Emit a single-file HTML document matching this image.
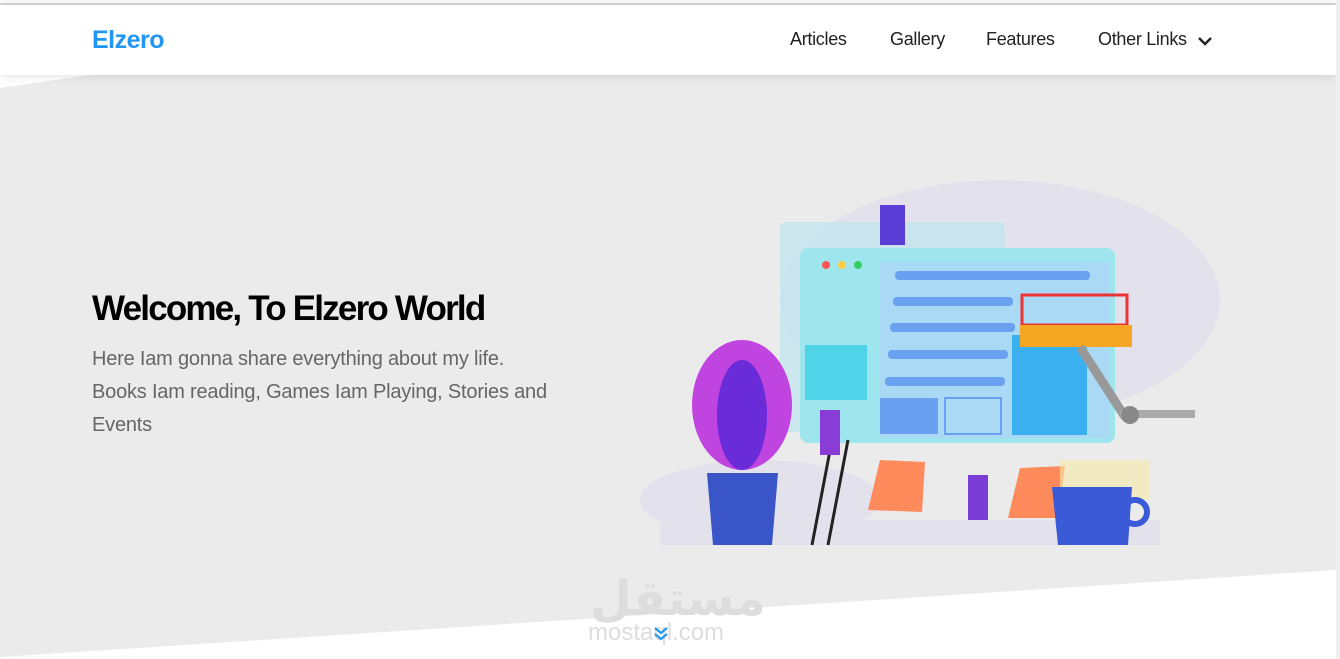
<!DOCTYPE html>
<html><head><style>
*{margin:0;padding:0;box-sizing:border-box}
body{width:1340px;height:659px;overflow:hidden;background:#fff;font-family:"Liberation Sans",sans-serif;position:relative}
.topline{position:absolute;left:0;top:3px;width:1340px;height:2px;background:#ddd}
.sb{position:absolute;right:0;top:0;width:4px;height:659px;background:#f0f0f0}
.bg{position:absolute;left:0;top:0;width:1336px;height:659px}
header{position:absolute;left:0;top:5px;width:1336px;height:70px;background:#fff;box-shadow:0 0 10px rgba(0,0,0,.15)}
.logo{position:absolute;left:92px;top:21px;font-size:25px;font-weight:bold;color:#2196f3;letter-spacing:-0.5px}
nav{position:absolute;top:24px;font-size:18px;color:#222}
nav span{position:absolute;white-space:nowrap;letter-spacing:-0.3px}
h1{position:absolute;left:92px;top:289px;font-size:35px;font-weight:bold;letter-spacing:-1.8px;color:#000;white-space:nowrap}
p{position:absolute;left:92px;top:343px;font-size:20px;line-height:33px;color:#666;white-space:nowrap;letter-spacing:-0.2px}
</style></head><body>
<svg class="bg" viewBox="0 0 1336 659">
<polygon points="0,88 90,75 1336,75 1336,570 0,657" fill="#ebebeb"/>
<text x="590" y="615" font-size="48" font-weight="bold" fill="#ddd" font-family="DejaVu Sans,sans-serif">مستقل</text>
<text x="588" y="640" font-size="24" fill="#ddd" font-family="Liberation Sans,sans-serif">mostaql.com</text>
<path d="M655 628l6 5 6-5M655 634l6 5 6-5" stroke="#2196f3" stroke-width="2.2" fill="none"/>
<ellipse cx="1000" cy="300" rx="220" ry="120" fill="#e3e2ec"/>
<ellipse cx="760" cy="500" rx="120" ry="40" fill="#e3e2ec"/>
<rect x="660" y="520" width="500" height="25" fill="#e3e2ec"/>
<rect x="780" y="222" width="225" height="210" rx="6" fill="#bfe6ef" opacity=".7"/>
<rect x="800" y="248" width="315" height="195" rx="8" fill="#9fe5ee"/>
<rect x="880" y="262" width="230" height="176" fill="#a9d9f5"/>
<circle cx="826" cy="265" r="4" fill="#f55"/><circle cx="842" cy="265" r="4" fill="#fc4"/><circle cx="858" cy="265" r="4" fill="#3c6"/>
<rect x="895" y="271" width="195" height="9" rx="4" fill="#6aa0f0"/>
<rect x="893" y="297" width="120" height="9" rx="4" fill="#6aa0f0"/>
<rect x="890" y="323" width="125" height="9" rx="4" fill="#6aa0f0"/>
<rect x="888" y="350" width="120" height="9" rx="4" fill="#6aa0f0"/>
<rect x="885" y="377" width="120" height="9" rx="4" fill="#6aa0f0"/>
<rect x="805" y="345" width="62" height="55" fill="#4fd3e8"/>
<rect x="880" y="398" width="58" height="36" fill="#6aa0f0"/>
<rect x="945" y="398" width="56" height="36" fill="none" stroke="#6aa0f0" stroke-width="2"/>
<rect x="1012" y="335" width="75" height="100" fill="#3ab0f0"/>
<rect x="1022" y="295" width="105" height="30" fill="none" stroke="#e33" stroke-width="3"/>
<rect x="1020" y="325" width="112" height="22" fill="#f5a623"/>
<path d="M1080 347l45 70" stroke="#999" stroke-width="9"/>
<rect x="1120" y="410" width="75" height="8" fill="#aaa"/>
<circle cx="1130" cy="415" r="9" fill="#888"/>
<ellipse cx="742" cy="405" rx="50" ry="65" fill="#c044e0"/>
<ellipse cx="742" cy="415" rx="25" ry="55" fill="#6a2bd8"/>
<polygon points="707,473 778,473 772,545 713,545" fill="#3a55c8"/>
<path d="M812 545l20-105M828 545l20-105" stroke="#222" stroke-width="3"/>
<rect x="820" y="410" width="20" height="45" fill="#8a3dd6"/>
<rect x="880" y="205" width="25" height="40" fill="#5a3dd6"/>
<rect x="968" y="475" width="20" height="45" fill="#7a3dd6"/>
<polygon points="880,460 925,462 922,512 868,510" fill="#ff8a5c"/>
<polygon points="1020,468 1065,466 1058,518 1008,518" fill="#ff8a5c"/>
<rect x="1060" y="460" width="90" height="40" fill="#f7e9a6" opacity=".6"/>
<polygon points="1052,487 1132,487 1128,545 1058,545" fill="#3a5ad8"/>
<circle cx="1135" cy="512" r="12" fill="none" stroke="#3a5ad8" stroke-width="6"/>
</svg>
<div class="topline"></div>
<header>
<div class="logo">Elzero</div>
<nav>
<span style="left:790px">Articles</span>
<span style="left:890px">Gallery</span>
<span style="left:986px">Features</span>
<span style="left:1098px">Other Links</span>
<svg style="position:absolute;left:1197px;top:6px" width="16" height="12"><path d="M2 3l6 6 6-6" stroke="#222" stroke-width="2.4" fill="none"/></svg>
</nav>
</header>
<h1>Welcome, To Elzero World</h1>
<p>Here Iam gonna share everything about my life.<br>Books Iam reading, Games Iam Playing, Stories and<br>Events</p>
<div class="sb"></div>
</body></html>
